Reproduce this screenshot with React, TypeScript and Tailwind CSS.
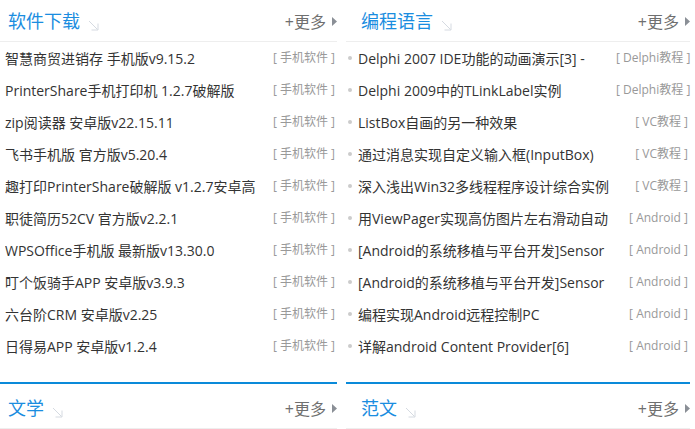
const font = { fontFamily: '"Open Sans", "Noto Sans CJK SC", sans-serif' };

interface Item {
  title: string;
  tag: string;
}

const software: Item[] = [
  { title: '智慧商贸进销存 手机版v9.15.2', tag: '手机软件' },
  { title: 'PrinterShare手机打印机 1.2.7破解版', tag: '手机软件' },
  { title: 'zip阅读器 安卓版v22.15.11', tag: '手机软件' },
  { title: '飞书手机版 官方版v5.20.4', tag: '手机软件' },
  { title: '趣打印PrinterShare破解版 v1.2.7安卓高', tag: '手机软件' },
  { title: '职徒简历52CV 官方版v2.2.1', tag: '手机软件' },
  { title: 'WPSOffice手机版 最新版v13.30.0', tag: '手机软件' },
  { title: '叮个饭骑手APP 安卓版v3.9.3', tag: '手机软件' },
  { title: '六台阶CRM 安卓版v2.25', tag: '手机软件' },
  { title: '日得易APP 安卓版v1.2.4', tag: '手机软件' },
];

const coding: Item[] = [
  { title: 'Delphi 2007 IDE功能的动画演示[3] -', tag: 'Delphi教程' },
  { title: 'Delphi 2009中的TLinkLabel实例', tag: 'Delphi教程' },
  { title: 'ListBox自画的另一种效果', tag: 'VC教程' },
  { title: '通过消息实现自定义输入框(InputBox)', tag: 'VC教程' },
  { title: '深入浅出Win32多线程程序设计综合实例', tag: 'VC教程' },
  { title: '用ViewPager实现高仿图片左右滑动自动', tag: 'Android' },
  { title: '[Android的系统移植与平台开发]Sensor', tag: 'Android' },
  { title: '[Android的系统移植与平台开发]Sensor', tag: 'Android' },
  { title: '编程实现Android远程控制PC', tag: 'Android' },
  { title: '详解android Content Provider[6]', tag: 'Android' },
];

function CornerArrow() {
  return (
    <svg width="11" height="11" viewBox="0 0 11 11" className="mt-[10px] ml-[8px]" fill="none">
      <path d="M1 1 L9.5 9.5" stroke="#d5dae1" strokeWidth="1" />
      <path d="M10 3.5 V10 H3.5" stroke="#d5dae1" strokeWidth="1" />
    </svg>
  );
}

function TitleBar({ title, className = '' }: { title: string; className?: string }) {
  return (
    <div className={`flex items-center justify-between border-b border-[#eeeeee] pl-[15px] ${className}`}>
      <div className="flex items-center">
        <span className="text-[18px] leading-none text-[#1a8de0]">{title}</span>
        <CornerArrow />
      </div>
      <div className="flex items-center gap-[6px] pt-[2px]">
        <span className="text-[16px] leading-none text-[#6f6f6f]">+更多</span>
        <svg width="5" height="9" viewBox="0 0 5 9">
          <path d="M0 0 L5 4.5 L0 9 Z" fill="#8a8f96" />
        </svg>
      </div>
    </div>
  );
}

function Column({ title, items, nextTitle }: { title: string; items: Item[]; nextTitle: string }) {
  return (
    <div className="w-[344px] shrink-0">
      <TitleBar title={title} className="h-[42px]" />
      <ul>
        {items.map((item, i) => (
          <li key={i} className="flex h-[32px] items-center">
            <span className="ml-[2px] h-[4px] w-[4px] shrink-0 rounded-full bg-[#cccccc]" />
            <span className="ml-[6px] w-[258px] shrink-0 overflow-hidden whitespace-nowrap text-[14px] text-[#333333]">
              {item.title}
            </span>
            <span className="ml-auto mr-[2px] whitespace-nowrap text-[12px] text-[#999999]">
              [ {item.tag} ]
            </span>
          </li>
        ))}
      </ul>
      <div className="mt-[20px] border-t-2 border-[#0a8ad9]">
        <TitleBar title={nextTitle} className="h-[45px] pt-[3px]" />
      </div>
    </div>
  );
}

export default function App() {
  return (
    <div className="h-[429px] w-[695px] overflow-hidden bg-white" style={font}>
      <div className="ml-[-7px] flex gap-[9px]">
        <Column title="软件下载" items={software} nextTitle="文学" />
        <Column title="编程语言" items={coding} nextTitle="范文" />
      </div>
    </div>
  );
}
